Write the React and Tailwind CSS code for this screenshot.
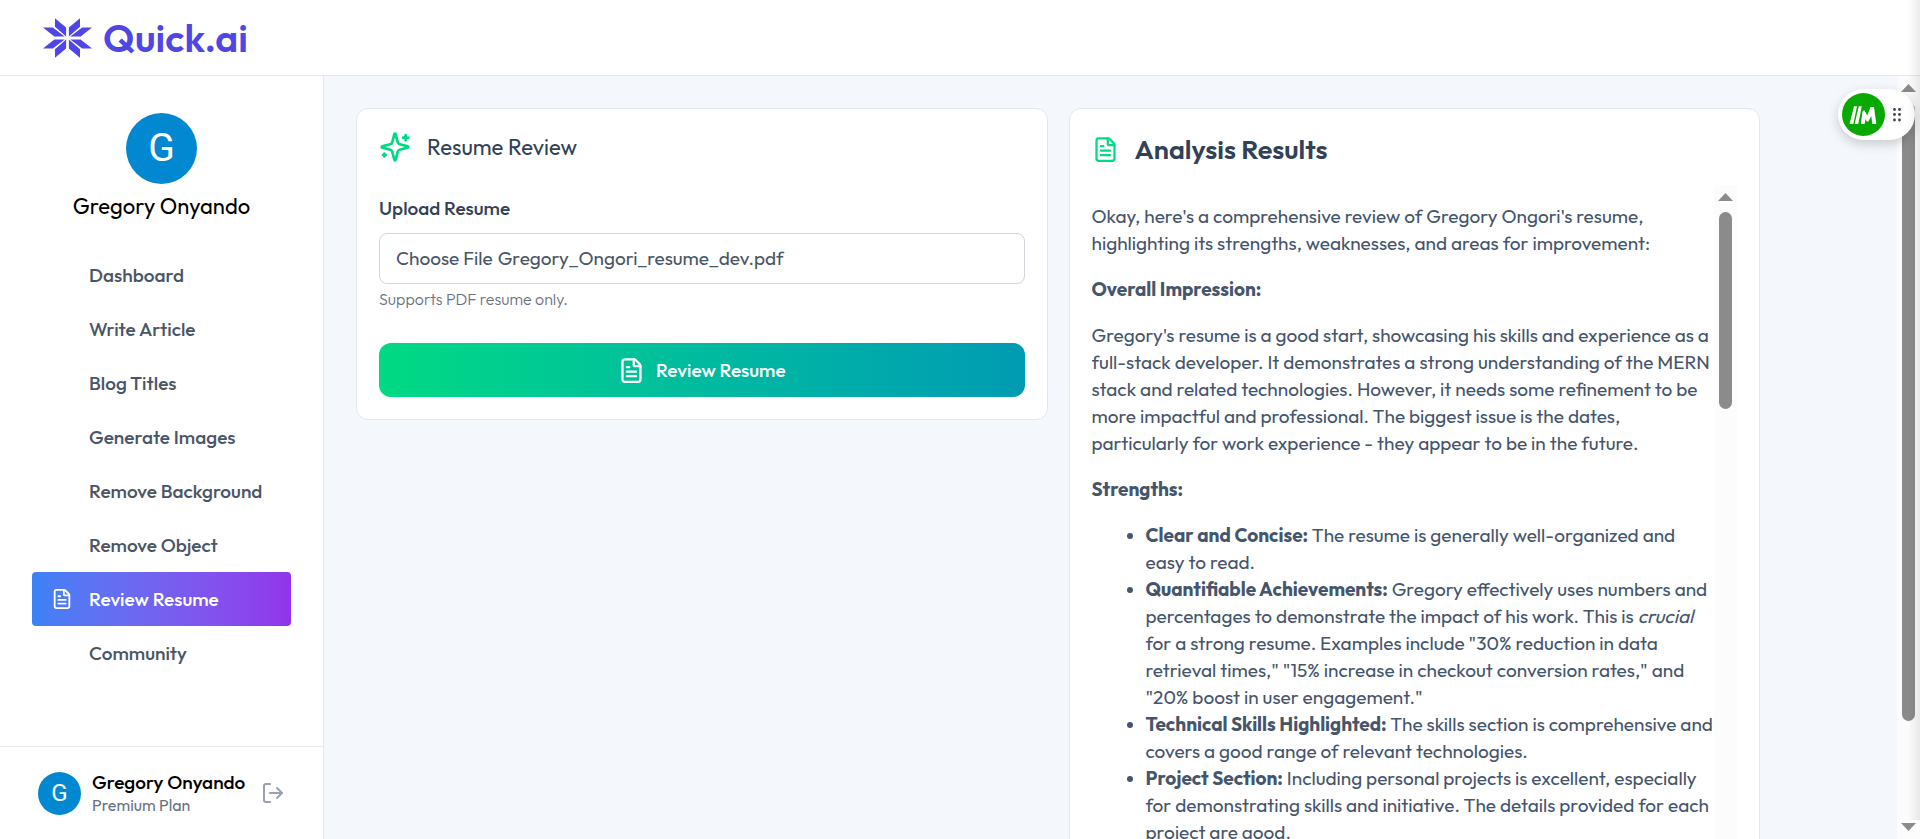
import { FileText, LogOut } from "lucide-react";

const navItems = [
  "Dashboard",
  "Write Article",
  "Blog Titles",
  "Generate Images",
  "Remove Background",
  "Remove Object",
  "Review Resume",
  "Community",
];

function Logo() {
  return (
    <a href="#home" className="flex items-center gap-[10px] text-[#4f46e5]">
      <svg viewBox="0 0 50 40" className="h-10 w-[50px]" fill="currentColor" aria-hidden="true">
        {[
          "",
          "translate(49 0) scale(-1 1)",
          "translate(0 40) scale(1 -1)",
          "translate(49 40) scale(-1 -1)",
        ].map((t) => (
          <g key={t} transform={t}>
            <path d="M12 0.300L23.100 9.600V18.400L12 8.700Z" />
            <path d="M0 9.500H9.800L21.700 18.600H11.300Z" />
          </g>
        ))}
      </svg>
      <span className="text-[39px] leading-10 font-semibold">Quick.ai</span>
    </a>
  );
}

function SparklesIcon() {
  return (
    <svg
      viewBox="0 0 24 24"
      className="size-8 text-[#00da83]"
      fill="none"
      stroke="currentColor"
      strokeWidth="2"
      strokeLinecap="round"
      strokeLinejoin="round"
      aria-hidden="true"
    >
      <path d="M9.937 15.5A2 2 0 0 0 8.5 14.063l-6.135-1.582a.5.5 0 0 1 0-.962L8.5 9.936A2 2 0 0 0 9.937 8.5l1.582-6.135a.5.5 0 0 1 .963 0L14.063 8.5A2 2 0 0 0 15.5 9.937l6.135 1.581a.5.5 0 0 1 0 .964L15.5 14.063a2 2 0 0 0-1.437 1.437l-1.582 6.135a.5.5 0 0 1-.963 0z" />
      <path d="M20 3v4" />
      <path d="M22 5h-4" />
      <path d="M4 17v2" />
      <path d="M5 18H3" />
    </svg>
  );
}

function Sidebar() {
  return (
    <aside className="flex w-[324px] shrink-0 flex-col border-r border-gray-200 bg-white">
      <div className="flex flex-1 flex-col items-center px-8 pt-[37px]">
        <div className="flex size-[71px] items-center justify-center rounded-full bg-[#0288d1] font-['Roboto',sans-serif] text-[39px] text-white">
          G
        </div>
        <h1 className="mt-1.5 text-[22px] leading-8 text-black">Gregory Onyando</h1>
        <nav className="mt-[26px] flex w-full flex-col">
          {navItems.map((item) =>
            item === "Review Resume" ? (
              <a
                key={item}
                href="#review-resume"
                aria-current="page"
                className="flex h-[54px] items-center rounded bg-linear-to-r from-[#3c81f6] to-[#9234ea] pl-[19px] font-medium text-white"
              >
                <FileText className="mr-4 size-[22px]" strokeWidth={2} aria-hidden="true" />
                {item}
              </a>
            ) : (
              <a key={item} href="#section" className="flex h-[54px] items-center pl-[57px] font-medium text-gray-600">
                {item}
              </a>
            )
          )}
        </nav>
      </div>
      <div className="flex h-[93px] shrink-0 items-center justify-between border-t border-gray-200 px-[38px]">
        <div className="flex items-center gap-[11px]">
          <div className="flex size-[43px] items-center justify-center rounded-full bg-[#0288d1] font-['Roboto',sans-serif] text-[24px] text-white">
            G
          </div>
          <div>
            <p className="leading-6 font-medium text-black">Gregory Onyando</p>
            <p className="text-[16px] leading-[23px] text-gray-500">Premium Plan</p>
          </div>
        </div>
        <button type="button" aria-label="Sign out" className="text-gray-400">
          <LogOut className="size-6" strokeWidth={2} />
        </button>
      </div>
    </aside>
  );
}

function ArrowUp() {
  return (
    <svg viewBox="0 0 15 8" className="h-2 w-[15px] shrink-0" fill="#8b8b8b" aria-hidden="true">
      <path d="M7.500 0L15 8H0Z" />
    </svg>
  );
}

function UploadCard() {
  return (
    <form className="min-w-0 flex-1 rounded-xl border border-gray-200 bg-white p-[22px]">
      <div className="flex h-8 items-center gap-4">
        <SparklesIcon />
        <h2 className="text-[22px] leading-8 text-slate-700">Resume Review</h2>
      </div>
      <label htmlFor="resume" className="mt-[31px] block leading-7 font-medium text-slate-700">
        Upload Resume
      </label>
      <label
        htmlFor="resume"
        className="mt-[11px] flex h-[51px] items-center gap-[5px] rounded-lg border border-gray-300 px-4 text-gray-600"
      >
        <span>Choose File</span>
        <span>Gregory_Ongori_resume_dev.pdf</span>
        <input id="resume" type="file" accept="application/pdf" className="sr-only" />
      </label>
      <p className="mt-[3px] text-[16px] leading-6 font-light text-gray-500">Supports PDF resume only.</p>
      <button
        type="button"
        className="mt-8 flex h-[54px] w-full items-center justify-center gap-[11px] rounded-xl bg-linear-to-r from-[#00da83] to-[#009bb3] font-medium text-white"
      >
        <FileText className="size-[27px]" strokeWidth={2} aria-hidden="true" />
        Review Resume
      </button>
    </form>
  );
}

function ResultsCard() {
  return (
    <section className="flex h-[810px] min-w-0 flex-1 flex-col rounded-xl border border-gray-200 bg-white px-[22px] pt-[22px]">
      <div className="flex h-9 items-center gap-4">
        <FileText className="size-[27px] text-[#00da83]" strokeWidth={2} aria-hidden="true" />
        <h2 className="text-[27px] leading-9 font-semibold text-slate-700">Analysis Results</h2>
      </div>
      <div className="mt-[18px] flex min-h-0 flex-1">
        <div className="min-w-0 flex-1 space-y-[19px] overflow-hidden pt-[18px] whitespace-nowrap text-slate-600">
          <p>
            Okay, here's a comprehensive review of Gregory Ongori's resume,
            <br />
            highlighting its strengths, weaknesses, and areas for improvement:
          </p>
          <p className="font-bold">Overall Impression:</p>
          <p>
            Gregory's resume is a good start, showcasing his skills and experience as a
            <br />
            full-stack developer. It demonstrates a strong understanding of the MERN
            <br />
            stack and related technologies. However, it needs some refinement to be
            <br />
            more impactful and professional. The biggest issue is the dates,
            <br />
            particularly for work experience - they appear to be in the future.
          </p>
          <p className="font-bold">Strengths:</p>
          <ul className="list-disc pl-[54px]">
            <li>
              <strong>Clear and Concise:</strong> The resume is generally well-organized and
              <br />
              easy to read.
            </li>
            <li>
              <strong>Quantifiable Achievements:</strong> Gregory effectively uses numbers and
              <br />
              percentages to demonstrate the impact of his work. This is <em>crucial</em>
              <br />
              for a strong resume. Examples include "30% reduction in data
              <br />
              retrieval times," "15% increase in checkout conversion rates," and
              <br />
              "20% boost in user engagement."
            </li>
            <li>
              <strong>Technical Skills Highlighted:</strong> The skills section is comprehensive and
              <br />
              covers a good range of relevant technologies.
            </li>
            <li>
              <strong>Project Section:</strong> Including personal projects is excellent, especially
              <br />
              for demonstrating skills and initiative. The details provided for each
              <br />
              project are good.
            </li>
          </ul>
        </div>
        <div className="flex w-[23px] shrink-0 flex-col items-center bg-[#fcfcfc] pt-2" aria-hidden="true">
          <ArrowUp />
          <div className="mt-[11px] h-[197px] w-[13px] rounded-full bg-[#8b8b8b]" />
        </div>
      </div>
    </section>
  );
}

function FloatingWidget() {
  return (
    <div className="absolute top-[89px] right-[5px] flex h-[51px] w-[77px] items-center rounded-full bg-white pl-1 shadow-[0_4px_12px_rgba(0,0,0,0.18)]">
      <button type="button" aria-label="Open assistant" className="size-[43px] rounded-full bg-[#08a900]">
        <svg viewBox="0 0 43 43" className="size-[43px]" fill="white" aria-hidden="true">
          <path d="M12 13.200H15L11.300 31H7.500Z" />
          <path d="M16.800 13.200H19.800L16.200 31H12.600Z" />
          <path d="M20.500 18.500L22.300 17L25.200 22.500L28.500 14H32L34.300 31H30.300L29.300 23L26.300 28.500H24.700L23.500 26L22.600 31H18.800Z" />
        </svg>
      </button>
      <svg viewBox="0 0 8 14" className="ml-2 h-[14px] w-2" fill="#3f3f50" aria-hidden="true">
        {[1.5, 6.5, 12].map((y) => (
          <g key={y}>
            <circle cx="1.500" cy={y} r="1.400" />
            <circle cx="6.500" cy={y} r="1.400" />
          </g>
        ))}
      </svg>
    </div>
  );
}

export default function App() {
  return (
    <div className="relative flex h-screen flex-col overflow-hidden bg-white font-['Outfit','Lato',sans-serif] text-[19px] leading-[27px]">
      <header className="flex h-[76px] shrink-0 items-center border-b border-gray-200 px-[43px]">
        <Logo />
      </header>
      <div className="flex min-h-0 flex-1">
        <Sidebar />
        <main className="flex min-w-0 flex-1 items-start gap-[21px] overflow-hidden bg-[#f4f7fb] py-8 pr-[137px] pl-8">
          <UploadCard />
          <ResultsCard />
        </main>
        <div className="flex w-[23px] shrink-0 flex-col items-center bg-[#fcfcfc] py-2" aria-hidden="true">
          <ArrowUp />
          <div className="mt-[11px] h-[618px] w-[13px] rounded-full bg-[#8b8b8b]" />
          <div className="mt-auto rotate-180">
            <ArrowUp />
          </div>
        </div>
      </div>
      <FloatingWidget />
      <div className="pointer-events-none absolute top-0 right-0 h-[820px] w-3 bg-linear-to-r from-transparent to-black/8" />
    </div>
  );
}
